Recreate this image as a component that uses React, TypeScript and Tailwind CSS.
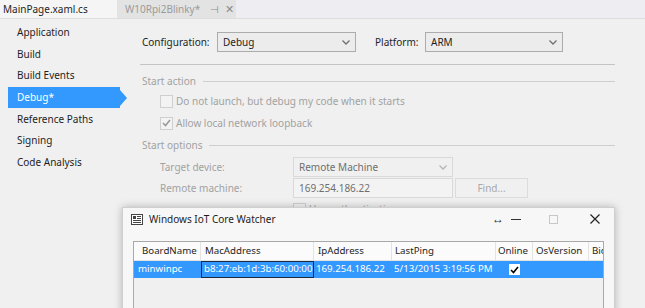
import React from "react";

const font = { fontFamily: '"Noto Sans", "Open Sans", sans-serif' };

function Chevron({ color = "#707070" }: { color?: string }) {
  return (
    <svg width="8" height="5" viewBox="0 0 8 5">
      <path d="M0.5 0.5 L4 4 L7.5 0.5" fill="none" stroke={color} strokeWidth="1.3" />
    </svg>
  );
}

function Check({ color }: { color: string }) {
  return (
    <svg width="9" height="8" viewBox="0 0 9 8">
      <path d="M1 4 L3.5 6.5 L8 1" fill="none" stroke={color} strokeWidth="1.6" />
    </svg>
  );
}

function CheckBox({ checked }: { checked?: boolean }) {
  return (
    <div className="w-[13px] h-[13px] border border-[#cfcfcf] bg-[#f3f3f3] flex items-center justify-center shrink-0">
      {checked && <Check color="#9a9a9a" />}
    </div>
  );
}

const sideItems = [
  "Application",
  "Build",
  "Build Events",
  "Debug*",
  "Reference Paths",
  "Signing",
  "Code Analysis",
];

export default function App() {
  return (
    <div
      className="relative w-[645px] h-[308px] overflow-hidden bg-[#f0f0f0] text-[10px] text-[#1e1e1e]"
      style={font}
    >
      {/* tab bar */}
      <div className="flex h-[19px] bg-[#eeeef2] border-b border-[#dedede]">
        <div className="w-[117px] bg-[#f5f5f5] flex items-center pl-[3px] text-[#1e1e1e]">
          MainPage.xaml.cs
        </div>
        <div className="w-[119px] bg-[#e3e3e3] flex items-center pl-[8px] text-[#9a9a9a]">
          <span>W10Rpi2Blinky*</span>
          <span className="ml-[10px] text-[10px] text-[#8a8a8a]">⊣</span>
          <span className="ml-[6px] text-[11px] text-[#8a8a8a]">✕</span>
        </div>
        <div className="flex-1" />
      </div>

      <div className="flex">
        {/* sidebar */}
        <div className="w-[130px] pt-[3px] shrink-0">
          {sideItems.map((s) => {
            const active = s === "Debug*";
            return (
              <div key={s} className="relative h-[21.6px] ml-[8px] w-[112px]">
                <div
                  className={
                    "h-full flex items-center pl-[9px] " +
                    (active ? "bg-[#3399ff] text-white" : "")
                  }
                >
                  {s}
                </div>
                {active && (
                  <svg
                    className="absolute left-[112px] top-[3px]"
                    width="8"
                    height="16"
                    viewBox="0 0 8 16"
                  >
                    <path d="M0 0 L7 8 L0 16 Z" fill="#3399ff" />
                  </svg>
                )}
              </div>
            );
          })}
        </div>

        {/* content */}
        <div className="flex-1 pt-[13px] pr-[30px] pl-[10px]">
          <div className="flex items-center h-[20px]">
            <span className="ml-[2px] w-[75px]">Configuration:</span>
            <div className="w-[139px] h-[20px] border border-[#acacac] bg-[#ececec] flex items-center justify-between px-[5px]">
              <span>Debug</span>
              <Chevron />
            </div>
            <span className="ml-[19px] w-[50px]">Platform:</span>
            <div className="w-[138px] h-[20px] border border-[#acacac] bg-[#ececec] flex items-center justify-between px-[5px]">
              <span>ARM</span>
              <Chevron />
            </div>
          </div>
          <div className="mt-[12px] border-t border-[#c4c4c4]" />

          <div className="mt-[8px] h-[16px] flex items-center text-[#a2a2a2]">
            <span className="ml-[2px]">Start action</span>
            <div className="flex-1 ml-[7px] border-t border-[#cfcfcf]" />
          </div>
          <div className="mt-[4px] h-[16px] flex items-center text-[#a2a2a2] pl-[20px]">
            <CheckBox />
            <span className="ml-[3px]">Do not launch, but debug my code when it starts</span>
          </div>
          <div className="mt-[6px] h-[16px] flex items-center text-[#a2a2a2] pl-[20px]">
            <CheckBox checked />
            <span className="ml-[3px]">Allow local network loopback</span>
          </div>

          <div className="mt-[6px] h-[16px] flex items-center text-[#a2a2a2]">
            <span className="ml-[2px]">Start options</span>
            <div className="flex-1 ml-[7px] border-t border-[#cfcfcf]" />
          </div>
          <div className="mt-[4px] h-[20px] flex items-center text-[#a2a2a2] pl-[20px]">
            <span className="w-[133px]">Target device:</span>
            <div className="w-[160px] h-[20px] border border-[#d9d9d9] bg-[#f0f0f0] flex items-center justify-between px-[5px] text-[#6f6f6f]">
              <span>Remote Machine</span>
              <Chevron color="#b5b5b5" />
            </div>
          </div>
          <div className="mt-[1px] h-[20px] flex items-center text-[#a2a2a2] pl-[20px]">
            <span className="w-[133px]">Remote machine:</span>
            <div className="w-[160px] h-[20px] border border-[#d9d9d9] bg-[#f3f3f3] flex items-center px-[5px] text-[#6f6f6f]">
              169.254.186.22
            </div>
            <div className="ml-[2px] w-[73px] h-[20px] border border-[#dcdcdc] bg-[#f0f0f0] flex items-center justify-center text-[#a8a8a8]">
              Find...
            </div>
          </div>
          <div className="mt-[3px] h-[16px] flex items-center text-[#a2a2a2] pl-[153px]">
            <CheckBox />
            <span className="ml-[3px]">Use authentication</span>
          </div>
        </div>
      </div>

      {/* overlay window */}
      <div className="absolute left-[122px] top-[207px] w-[493px] h-[110px] bg-[#f7f7f7] border border-[#cfcfcf] shadow-[0_0_8px_rgba(0,0,0,0.25)]">
        <div className="h-[22px] flex items-center">
          <svg className="ml-[8px]" width="12" height="11" viewBox="0 0 12 11">
            <rect x="0.5" y="0.5" width="11" height="10" fill="#fff" stroke="#444" />
            <rect x="2" y="2" width="3" height="3" fill="#444" />
            <rect x="6" y="2" width="4" height="1" fill="#444" />
            <rect x="6" y="4" width="4" height="1" fill="#444" />
            <rect x="2" y="6" width="8" height="1" fill="#444" />
            <rect x="2" y="8" width="8" height="1" fill="#444" />
          </svg>
          <span className="ml-[6px] text-[10px] text-[#1e1e1e]">Windows IoT Core Watcher</span>
          <div className="flex-1" />
          <span className="text-[12px] text-[#333] w-[14px]">↔</span>
          <div className="ml-[5px] w-[10px] h-[1px] bg-[#333]" />
          <div className="ml-[28px] w-[9px] h-[9px] border border-[#c8c8c8]" />
          <svg className="ml-[32px] mr-[14px]" width="10" height="10" viewBox="0 0 10 10">
            <path d="M0.5 0.5 L9.5 9.5 M9.5 0.5 L0.5 9.5" stroke="#222" strokeWidth="1.2" />
          </svg>
        </div>
        <div className="mt-[11px] ml-[10px] w-[471px] h-[90px] border border-[#a9a9a9] bg-[#f0f0f0] overflow-hidden text-[9.7px]">
          <div className="flex h-[19px] bg-[#fbfbfb] border-b border-[#e3e3e3] whitespace-nowrap">
            <div className="w-[67px] pl-[8px] flex items-center border-r border-[#e3e3e3] shrink-0">BoardName</div>
            <div className="w-[113px] pl-[4px] flex items-center border-r border-[#e3e3e3] shrink-0">MacAddress</div>
            <div className="w-[78px] pl-[4px] flex items-center border-r border-[#e3e3e3] shrink-0">IpAddress</div>
            <div className="w-[104px] pl-[3px] flex items-center border-r border-[#e3e3e3] shrink-0">LastPing</div>
            <div className="w-[37px] pl-[2px] flex items-center border-r border-[#e3e3e3] shrink-0">Online</div>
            <div className="w-[56px] pl-[3px] flex items-center border-r border-[#e3e3e3] shrink-0">OsVersion</div>
            <div className="w-[60px] pl-[3px] flex items-center shrink-0">BiosVersion</div>
          </div>
          <div className="flex h-[17px] bg-[#3399ff] text-white whitespace-nowrap">
            <div className="w-[67px] pl-[4px] flex items-center shrink-0">minwinpc</div>
            <div className="w-[113px] pl-[2px] flex items-center border border-[#1c2b44] shrink-0">
              b8:27:eb:1d:3b:60:00:00
            </div>
            <div className="w-[78px] pl-[2px] flex items-center shrink-0">169.254.186.22</div>
            <div className="w-[104px] pl-[2px] flex items-center shrink-0">5/13/2015 3:19:56 PM</div>
            <div className="w-[37px] flex items-center justify-center shrink-0">
              <div className="w-[11px] h-[11px] bg-white flex items-center justify-center">
                <Check color="#000" />
              </div>
            </div>
          </div>
        </div>
      </div>
    </div>
  );
}
